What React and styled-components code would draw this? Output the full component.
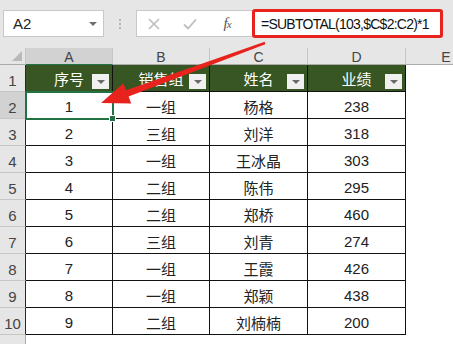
import React from "react";
import styled, { createGlobalStyle, css } from "styled-components";

const Global = createGlobalStyle`
  html, body { margin: 0; padding: 0; background: #fff; }
  body { font-family: "Liberation Sans", "Noto Sans CJK SC", sans-serif; }
  #root { width: 453px; height: 344px; overflow: hidden; }
`;

const Page = styled.div`
  position: relative;
  width: 453px;
  height: 344px;
  overflow: hidden;
  background: #fff;
`;

const Toolbar = styled.div`
  height: 48px;
  background: #e6e6e6;
  display: flex;
  align-items: flex-start;
  padding: 10px 0 0 3px;
  box-sizing: border-box;
`;

const NameBox = styled.div`
  width: 101px;
  height: 27px;
  box-sizing: border-box;
  background: #fff;
  border: 1px solid #c8c8c8;
  display: flex;
  align-items: center;
  justify-content: space-between;
  padding: 0 6px 0 9px;
  font-size: 15px;
  color: #222;
`;

const Caret = styled.span`
  width: 0;
  height: 0;
  border-left: 4px solid transparent;
  border-right: 4px solid transparent;
  border-top: 4px solid #707070;
`;

const Grip = styled.div`
  width: 32px;
  height: 27px;
  display: flex;
  flex-direction: column;
  align-items: center;
  justify-content: center;
  gap: 2px;
  span {
    width: 2px;
    height: 2px;
    background: #b4b4b4;
  }
`;

const FormulaWrap = styled.div`
  width: 307px;
  height: 27px;
  box-sizing: border-box;
  background: #fff;
  border: 1px solid #c8c8c8;
  border-right: none;
  display: flex;
  align-items: center;
`;

const IconSlot = styled.div`
  width: ${(p) => p.$w}px;
  height: 25px;
  display: flex;
  align-items: center;
  justify-content: center;
`;

const Fx = styled.span`
  font-family: "Liberation Serif", "DejaVu Serif", serif;
  font-style: italic;
  font-size: 15px;
  color: #555;
  letter-spacing: -1px;
  small { font-size: 11px; }
`;

const FormulaInput = styled.div`
  margin-left: auto;
  width: 191px;
  height: 29px;
  box-sizing: border-box;
  margin-top: -1px;
  margin-bottom: -1px;
  border: 3px solid #e8231d;
  border-radius: 3px;
  background: #fff;
  display: flex;
  align-items: center;
  padding-left: 6px;
  font-size: 14px;
  letter-spacing: -0.75px;
  color: #111;
  white-space: nowrap;
`;

const Sheet = styled.div`
  display: grid;
  grid-template-columns: 26px 87px 97px 98px 98px 80px;
  grid-template-rows: 17px repeat(10, 27px) 20px;
  width: 486px;
`;

const Corner = styled.div`
  background: #e6e6e6;
  border-right: 1px solid #c6c6c6;
  border-bottom: 1px solid #ababab;
  position: relative;
  &::after {
    content: "";
    position: absolute;
    right: 3px;
    bottom: 3px;
    border-left: 10px solid transparent;
    border-bottom: 10px solid #b9b9b9;
  }
`;

const ColHead = styled.div`
  background: ${(p) => (p.$active ? "#d2d2d2" : "#e6e6e6")};
  border-right: 1px solid #c6c6c6;
  border-bottom: 1px solid ${(p) => (p.$active ? "#217346" : "#ababab")};
  display: flex;
  align-items: center;
  justify-content: center;
  font-size: 14px;
  color: #444;
  padding-top: 2px;
  box-sizing: border-box;
  ${(p) =>
    p.$last &&
    css`
      border-right: none;
    `}
`;

const RowHead = styled.div`
  background: ${(p) => (p.$active ? "#d2d2d2" : "#e6e6e6")};
  border-bottom: 1px solid #c6c6c6;
  border-right: 1px solid ${(p) => (p.$active ? "#217346" : p.$blank ? "#ababab" : "#2a2a2a")};
  display: flex;
  align-items: center;
  justify-content: center;
  font-size: 15px;
  color: #444;
  padding-top: 4px;
  box-sizing: border-box;
`;

const Cell = styled.div`
  position: relative;
  box-sizing: border-box;
  border-right: 1px solid #111;
  border-bottom: 1px solid #111;
  display: flex;
  align-items: center;
  justify-content: center;
  padding-top: 3px;
  font-size: 15px;
  color: #222;
  ${(p) =>
    p.$header &&
    css`
      background: #375623;
      color: #fff;
      padding-top: 1px;
    `}
  ${(p) =>
    p.$selected &&
    css`
      outline: 2px solid #217346;
      outline-offset: -1px;
      z-index: 1;
      &::after {
        content: "";
        position: absolute;
        right: -4px;
        bottom: -4px;
        width: 5px;
        height: 5px;
        background: #217346;
        border: 1px solid #fff;
      }
    `}
`;

const EmptyCell = styled.div`
  background: #fff;
`;

const FilterBtn = styled.span`
  position: absolute;
  right: 3px;
  bottom: 2px;
  width: 17px;
  height: 15px;
  background: #f0f0f0;
  display: flex;
  align-items: center;
  justify-content: center;
  &::before {
    content: "";
    border-left: 4px solid transparent;
    border-right: 4px solid transparent;
    border-top: 4px solid #6a6a6a;
    margin-top: 1px;
  }
`;

const Arrow = styled.svg`
  position: absolute;
  left: 0;
  top: 0;
  pointer-events: none;
  z-index: 5;
`;

const headers = ["序号", "销售组", "姓名", "业绩"];
const rows = [
  ["1", "一组", "杨格", "238"],
  ["2", "三组", "刘洋", "318"],
  ["3", "一组", "王冰晶", "303"],
  ["4", "二组", "陈伟", "295"],
  ["5", "二组", "郑桥", "460"],
  ["6", "三组", "刘青", "274"],
  ["7", "一组", "王霞", "426"],
  ["8", "一组", "郑颖", "438"],
  ["9", "二组", "刘楠楠", "200"],
];

export default function App() {
  return (
    <Page>
      <Global />
      <Toolbar>
        <NameBox>
          A2
          <Caret />
        </NameBox>
        <Grip>
          <span />
          <span />
          <span />
        </Grip>
        <FormulaWrap>
          <IconSlot $w={34}>
            <svg width="12" height="12" viewBox="0 0 12 12">
              <path d="M1 1L11 11M11 1L1 11" stroke="#bdbdbd" strokeWidth="1.6" />
            </svg>
          </IconSlot>
          <IconSlot $w={38}>
            <svg width="14" height="12" viewBox="0 0 14 12">
              <path d="M1 6.5L5 10.5L13 1.5" stroke="#bdbdbd" strokeWidth="1.8" fill="none" />
            </svg>
          </IconSlot>
          <IconSlot $w={36}>
            <Fx>
              f<small>x</small>
            </Fx>
          </IconSlot>
          <FormulaInput>=SUBTOTAL(103,$C$2:C2)*1</FormulaInput>
        </FormulaWrap>
      </Toolbar>
      <Sheet>
        <Corner />
        <ColHead $active>A</ColHead>
        <ColHead>B</ColHead>
        <ColHead>C</ColHead>
        <ColHead>D</ColHead>
        <ColHead $last>E</ColHead>

        <RowHead>1</RowHead>
        {headers.map((h) => (
          <Cell key={h} $header>
            {h}
            <FilterBtn />
          </Cell>
        ))}
        <EmptyCell />

        {rows.map((r, i) => (
          <React.Fragment key={i}>
            <RowHead $active={i === 0}>{i + 2}</RowHead>
            {r.map((v, j) => (
              <Cell key={j} $selected={i === 0 && j === 0}>
                {v}
              </Cell>
            ))}
            <EmptyCell />
          </React.Fragment>
        ))}
        <RowHead $blank />
        <EmptyCell />
        <EmptyCell />
        <EmptyCell />
        <EmptyCell />
        <EmptyCell />
      </Sheet>
      <Arrow width="453" height="344" viewBox="0 0 453 344">
        <polygon
          points="265.3,44.2 128.6,96.6 131.2,103.5 101,103 123.4,83.3 126,90.2 264.7,41.8"
          fill="#e8231d"
        />
      </Arrow>
    </Page>
  );
}
